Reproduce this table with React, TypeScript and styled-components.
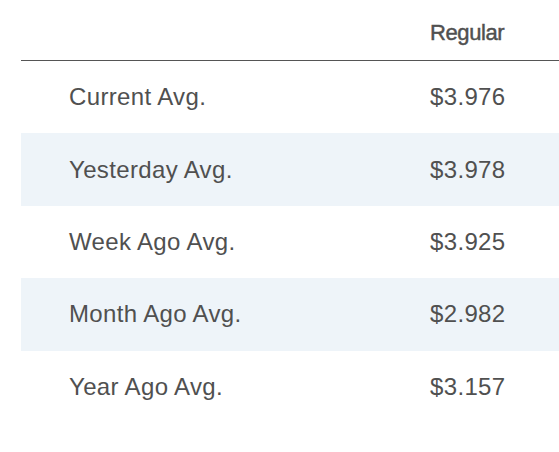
import { Fragment } from 'react'
import styled, { createGlobalStyle } from 'styled-components'

const GlobalStyle = createGlobalStyle`
    body {
        margin: 0;
        background: #fff;
        font-family: "Liberation Sans", Arial, sans-serif;
    }
`

const Wrapper = styled.div`
    padding-left: 21px;
`

const Table = styled.div`
    display: grid;
    grid-template-columns: 409px 1fr;
    color: #505050;
`

const HeaderCell = styled.div`
    height: 61px;
    border-bottom: 1px solid #555;
    display: flex;
    align-items: center;
    padding-top: 5px;
    box-sizing: border-box;
    font-size: 22px;
    letter-spacing: -0.4px;
    -webkit-text-stroke: 0.45px #505050;
    color: #505050;
`

const Cell = styled.div<{ $striped: boolean; $label?: boolean }>`
    height: 72.4px;
    display: flex;
    align-items: center;
    padding-left: ${p => (p.$label ? '48px' : '0')};
    font-size: 24px;
    letter-spacing: 0.35px;
    background: ${p => (p.$striped ? '#eef4f9' : 'transparent')};
`

const rows = [
    { label: 'Current Avg.', regular: '$3.976' },
    { label: 'Yesterday Avg.', regular: '$3.978' },
    { label: 'Week Ago Avg.', regular: '$3.925' },
    { label: 'Month Ago Avg.', regular: '$2.982' },
    { label: 'Year Ago Avg.', regular: '$3.157' },
]

const App = () => {
    return (
        <Wrapper>
            <GlobalStyle />
            <Table>
                <HeaderCell />
                <HeaderCell>Regular</HeaderCell>
                {rows.map((row, i) => (
                    <Fragment key={row.label}>
                        <Cell $striped={i % 2 === 1} $label>
                            {row.label}
                        </Cell>
                        <Cell $striped={i % 2 === 1}>{row.regular}</Cell>
                    </Fragment>
                ))}
            </Table>
        </Wrapper>
    )
}

export default App
